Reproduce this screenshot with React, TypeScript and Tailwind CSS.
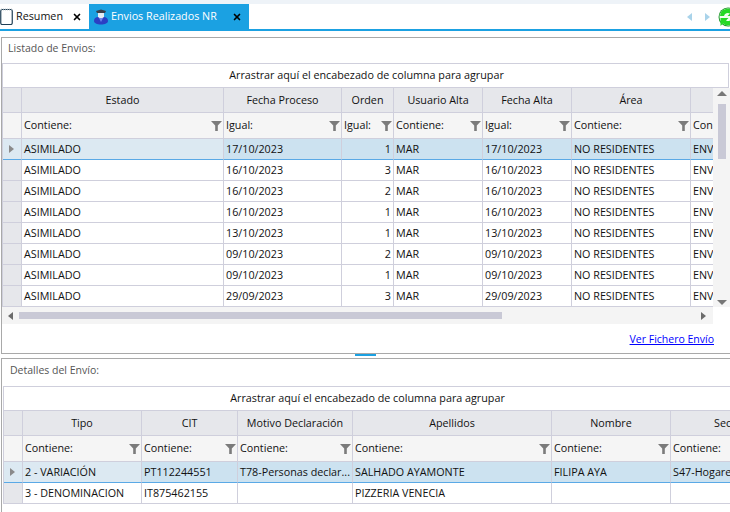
import React from 'react';
import { X } from 'lucide-react';

const font = 'font-["Open_Sans","Noto_Sans",sans-serif]';

interface Column {
  title: string,
  filter: string,
  align?: string,
}

const envioColumns: Column[] = [
  { title: 'Estado', filter: 'Contiene:' },
  { title: 'Fecha Proceso', filter: 'Igual:' },
  { title: 'Orden', filter: 'Igual:', align: 'text-right' },
  { title: 'Usuario Alta', filter: 'Contiene:' },
  { title: 'Fecha Alta', filter: 'Igual:' },
  { title: 'Área', filter: 'Contiene:' },
  { title: '', filter: 'Con' },
];

const envioRows = [
  ['ASIMILADO', '17/10/2023', '1', 'MAR', '17/10/2023', 'NO RESIDENTES', 'ENV'],
  ['ASIMILADO', '16/10/2023', '3', 'MAR', '16/10/2023', 'NO RESIDENTES', 'ENV'],
  ['ASIMILADO', '16/10/2023', '2', 'MAR', '16/10/2023', 'NO RESIDENTES', 'ENV'],
  ['ASIMILADO', '16/10/2023', '1', 'MAR', '16/10/2023', 'NO RESIDENTES', 'ENV'],
  ['ASIMILADO', '13/10/2023', '1', 'MAR', '13/10/2023', 'NO RESIDENTES', 'ENV'],
  ['ASIMILADO', '09/10/2023', '2', 'MAR', '09/10/2023', 'NO RESIDENTES', 'ENV'],
  ['ASIMILADO', '09/10/2023', '1', 'MAR', '09/10/2023', 'NO RESIDENTES', 'ENV'],
  ['ASIMILADO', '29/09/2023', '3', 'MAR', '29/09/2023', 'NO RESIDENTES', 'ENV'],
];

const detalleColumns: Column[] = [
  { title: 'Tipo', filter: 'Contiene:' },
  { title: 'CIT', filter: 'Contiene:' },
  { title: 'Motivo Declaración', filter: 'Contiene:' },
  { title: 'Apellidos', filter: 'Contiene:' },
  { title: 'Nombre', filter: 'Contiene:' },
  { title: 'Sector', filter: 'Contiene:' },
];

const detalleRows = [
  ['2 - VARIACIÓN', 'PT112244551', 'T78-Personas declar...', 'SALHADO AYAMONTE', 'FILIPA AYA', 'S47-Hogares'],
  ['3 - DENOMINACION', 'IT875462155', '', 'PIZZERIA VENECIA', '', ''],
];

const envioGrid = 'grid grid-cols-[19px_202px_118px_52px_89px_89px_119px_60px]';
const detalleGrid = 'grid grid-cols-[19px_119px_96px_115px_199px_119px_119px]';

const FilterIcon = () => (
  <svg width="11" height="10" viewBox="0 0 11 10" className="shrink-0">
    <path d="M0 0h11L6.8 4.6V10H4.2V4.6z" fill="#7b7b7b" />
  </svg>
);

const NotebookIcon = () => (
  <svg width="13" height="17" viewBox="0 0 13 17" className="shrink-0">
    <rect x="0.75" y="1.5" width="11.5" height="15" rx="1.5" fill="#fff" stroke="#1f3f55" strokeWidth="1.2" />
    <path d="M1 1.5h11" stroke="#8a9aa5" strokeWidth="1.5" strokeDasharray="1 1" />
  </svg>
);

const HatIcon = () => (
  <svg width="16" height="16" viewBox="0 0 16 16" className="shrink-0">
    <path d="M3 2l5-1.5L13 2l-1 2H4z" fill="#3a3f4a" />
    <path d="M5 4h6v5H5z" fill="#e4ecf4" />
    <path d="M1 12c0-3 2-4 4-4l3 2 3-2c2 0 4 1 4 4 0 2-3 3.5-7 3.5S1 14 1 12z" fill="#2b3fc4" />
    <path d="M6 9h4l-2 4z" fill="#6f86ee" />
  </svg>
);

const RefreshIcon = () => (
  <svg width="20" height="22" viewBox="0 0 20 22" className="shrink-0">
    <circle cx="10" cy="11" r="9.5" fill="#1f9a2c" />
    <circle cx="10" cy="11" r="8.5" fill="#f2fff2" />
    <path d="M2 10a8 8 0 0 1 13-5.5L17.5 2v8h-8l2.5-2.5A4 4 0 0 0 6 10z" fill="#25d925" />
    <path d="M18 12a8 8 0 0 1-13 5.5L2.5 20v-8h8L8 14.5A4 4 0 0 0 14 12z" fill="#25d925" />
  </svg>
);

const Triangle = ({ dir, color }: { dir: 'left' | 'right' | 'up' | 'down', color: string }) => {
  const paths = {
    left: 'M6 1v8L1 5z',
    right: 'M2 1v8l5-4z',
    up: 'M5 2l5 5H0z',
    down: 'M0 3h10L5 8z',
  };
  return (
    <svg width="10" height="10" viewBox="0 0 10 10" className="shrink-0">
      <path d={paths[dir]} fill={color} />
    </svg>
  );
};

const TabStrip = () => (
  <div className="shrink-0">
    <div className="h-[4px] bg-[#eef3f8]" />
    <div className="h-[25px] flex items-stretch bg-white overflow-hidden">
      <div className="w-[89px] flex items-center text-[10.75px] text-[#111] whitespace-nowrap">
        <NotebookIcon />
        <span className="ml-[3px]">Resumen</span>
        <X size={10} strokeWidth={4} className="ml-[9px] text-black" />
      </div>
      <div className="w-[160px] flex items-center pl-[4px] bg-[#1ba1e2] text-[10.75px] text-white whitespace-nowrap">
        <HatIcon />
        <span className="ml-[2px]">Envios Realizados NR</span>
        <X size={10} strokeWidth={4} className="ml-[15px] text-black" />
      </div>
      <div className="flex-1 flex items-center justify-end gap-[7px] -mr-[8px]">
        <Triangle dir="left" color="#a9d3ea" />
        <Triangle dir="right" color="#a9d3ea" />
        <div className="-ml-[2px]"><RefreshIcon /></div>
      </div>
    </div>
    <div className="h-[2px] bg-[#1ba1e2]" />
  </div>
);

const cellBorder = 'border-r border-b border-[#cfcfdc]';

const Grid = ({
  columns,
  rows,
  gridClass,
  groupClass,
}: {
  columns: Column[],
  rows: string[][],
  gridClass: string,
  groupClass: string,
}) => (
  <div className="overflow-hidden text-[10.75px] text-[#111]">
    <div className={`${groupClass} h-[25px] flex items-center justify-center border-t border-b border-l border-[#cfcfdc]`}>
      Arrastrar aquí el encabezado de columna para agrupar
    </div>
    <div className={`${gridClass} w-max h-[25px] border-l border-[#cfcfdc] bg-[#e6e7eb]`}>
      <div className={cellBorder} />
      {columns.map((col) => (
        <div key={col.filter + col.title} className={`${cellBorder} flex items-center justify-center`}>
          {col.title}
        </div>
      ))}
    </div>
    <div className={`${gridClass} w-max h-[26px] border-l border-[#cfcfdc] bg-[#f5f5f5]`}>
      <div className={cellBorder} />
      {columns.map((col) => (
        <div key={col.title + col.filter} className={`${cellBorder} flex items-center justify-between pl-[2px] pr-[1px]`}>
          <span>{col.filter}</span>
          {col.title && <FilterIcon />}
        </div>
      ))}
    </div>
    {rows.map((row, r) => (
      <div
        key={r}
        className={`${gridClass} w-max h-[21px] border-l border-[#cfcfdc] ${r === 0 ? 'bg-[#cce2f0]' : 'bg-white'}`}
      >
        <div className={`${r === 0 ? 'border-b border-[#5aa9e6] bg-[#dce9f2]' : 'border-b border-[#cfcfdc] bg-[#e6e7eb]'} border-r border-r-[#cfcfdc] flex items-center justify-center`}>
          {r === 0 && <Triangle dir="right" color="#8a8a8a" />}
        </div>
        {row.map((cell, c) => {
          const hot = r === 0 && c === 0;
          return (
            <div
              key={c}
              className={`border-r border-r-[#cfcfdc] border-b ${r === 0 ? 'border-b-[#5aa9e6]' : 'border-b-[#cfcfdc]'} ${hot ? 'bg-[#dce9f2]' : ''} flex items-center px-[2px] whitespace-nowrap overflow-hidden ${columns[c]?.align === 'text-right' ? 'justify-end' : ''}`}
            >
              {cell}
            </div>
          );
        })}
      </div>
    ))}
  </div>
);

export default function App() {
  return (
    <div className={`${font} w-[730px] h-[512px] overflow-hidden bg-white flex flex-col`}>
      <TabStrip />

      <div className="mt-[6px] ml-[1px] h-[317px] shrink-0 border-t border-l border-b border-[#a9a9a9] flex flex-col relative">
        <div className="h-[25px] pl-[6px] pt-[3px] text-[10.5px] text-[#555]">Listado de Envios:</div>
        <Grid columns={envioColumns} rows={envioRows} gridClass={envioGrid} groupClass="w-[727px] pl-[2px] border-r" />
        <div className="w-[711px] h-[17px] bg-[#f4f4f4] flex items-center justify-between pl-[5px] pr-[4px]">
          <Triangle dir="left" color="#6b6b6b" />
          <div className="flex-1 h-[7px] ml-[2px] mr-[197px] bg-[#c9c9d6]" />
          <Triangle dir="right" color="#6b6b6b" />
        </div>
        <div className="w-[712px] text-right mt-[8px] text-[10.5px] text-[#0000ff] underline">Ver Fichero Envío</div>

        <div className="absolute left-[711px] top-[50px] w-[17px] h-[219px] bg-[#f4f4f4] flex flex-col items-center pt-[1px]">
          <Triangle dir="up" color="#777" />
          <div className="w-[8px] h-[55px] mt-[5px] bg-[#c9c9d6]" />
          <div className="mt-auto"><Triangle dir="down" color="#777" /></div>
        </div>
      </div>

      <div className="h-[4px] shrink-0 flex items-start justify-center">
        <div className="w-[21px] h-[2px] bg-[#1ba1e2]" />
      </div>

      <div className="ml-[1px] flex-1 border-t border-l border-[#a9a9a9] pl-[1px]">
        <div className="h-[27px] pl-[7px] pt-[4px] text-[10.5px] text-[#555]">Detalles del Envío:</div>
        <Grid columns={detalleColumns} rows={detalleRows} gridClass={detalleGrid} groupClass="w-[728px]" />
      </div>
    </div>
  );
}
